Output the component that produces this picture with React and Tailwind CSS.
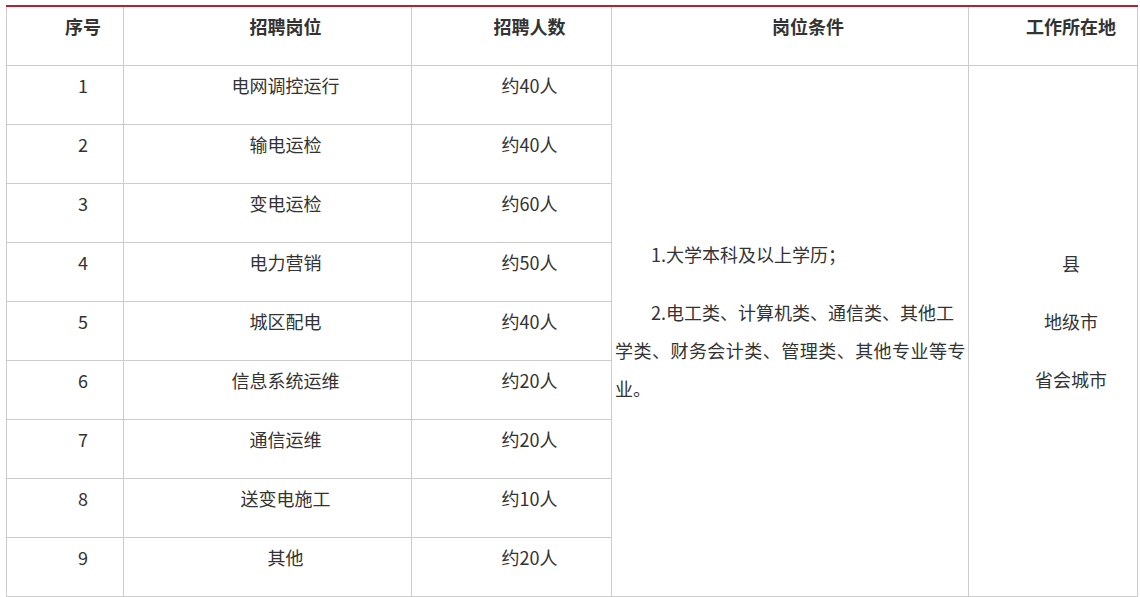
import React from 'react';

const rows = [
  { no: 1, job: '电网调控运行', count: '约40人' },
  { no: 2, job: '输电运检', count: '约40人' },
  { no: 3, job: '变电运检', count: '约60人' },
  { no: 4, job: '电力营销', count: '约50人' },
  { no: 5, job: '城区配电', count: '约40人' },
  { no: 6, job: '信息系统运维', count: '约20人' },
  { no: 7, job: '通信运维', count: '约20人' },
  { no: 8, job: '送变电施工', count: '约10人' },
  { no: 9, job: '其他', count: '约20人' },
];

const headers = ['序号', '招聘岗位', '招聘人数', '岗位条件', '工作所在地'];

const cell = 'border border-[#cccccc] align-top p-0 h-[59px]';
const txt = 'm-0 text-center indent-[36px] leading-[38px]';

const App = () => {
  return (
    <div className="min-h-screen bg-white pt-[5px] pl-[6px] font-['Microsoft_YaHei','Noto_Sans_CJK_SC',sans-serif] text-[18px] text-[#333333]">
      <table className="table-fixed border-collapse w-[1131px]">
        <colgroup>
          <col className="w-[117px]" />
          <col className="w-[288px]" />
          <col className="w-[200px]" />
          <col className="w-[357px]" />
          <col className="w-[169px]" />
        </colgroup>
        <thead>
          <tr>
            {headers.map((h) => (
              <th
                key={h}
                className="border border-[#cccccc] border-t-2 border-t-[#b3242a] align-top p-0 h-[59px] font-bold"
              >
                <p className={txt}>{h}</p>
              </th>
            ))}
          </tr>
        </thead>
        <tbody>
          {rows.map((r, i) => (
            <tr key={r.no}>
              <td className={cell}>
                <p className={txt}>{r.no}</p>
              </td>
              <td className={cell}>
                <p className={txt}>{r.job}</p>
              </td>
              <td className={cell}>
                <p className={txt}>{r.count}</p>
              </td>
              {i === 0 && (
                <>
                  <td rowSpan={9} className="border border-[#cccccc] align-middle px-[3px] py-0">
                    <p className="m-0 mb-[20px] indent-[36px] leading-[38px]">1.大学本科及以上学历；</p>
                    <p className="m-0 mb-[20px] leading-[38px]">
                      <span className="block indent-[36px] whitespace-nowrap">2.电工类、计算机类、通信类、其他工</span>
                      <span className="block whitespace-nowrap tracking-[-0.5px] text-justify [text-align-last:justify]">学类、财务会计类、管理类、其他专业等专</span>
                      <span className="block">业。</span>
                    </p>
                  </td>
                  <td rowSpan={9} className="border border-[#cccccc] align-middle p-0">
                    <p className={`${txt} mb-[20px]`}>县</p>
                    <p className={`${txt} mb-[20px]`}>地级市</p>
                    <p className={`${txt} mb-[20px]`}>省会城市</p>
                  </td>
                </>
              )}
            </tr>
          ))}
        </tbody>
      </table>
    </div>
  );
};

export default App;
